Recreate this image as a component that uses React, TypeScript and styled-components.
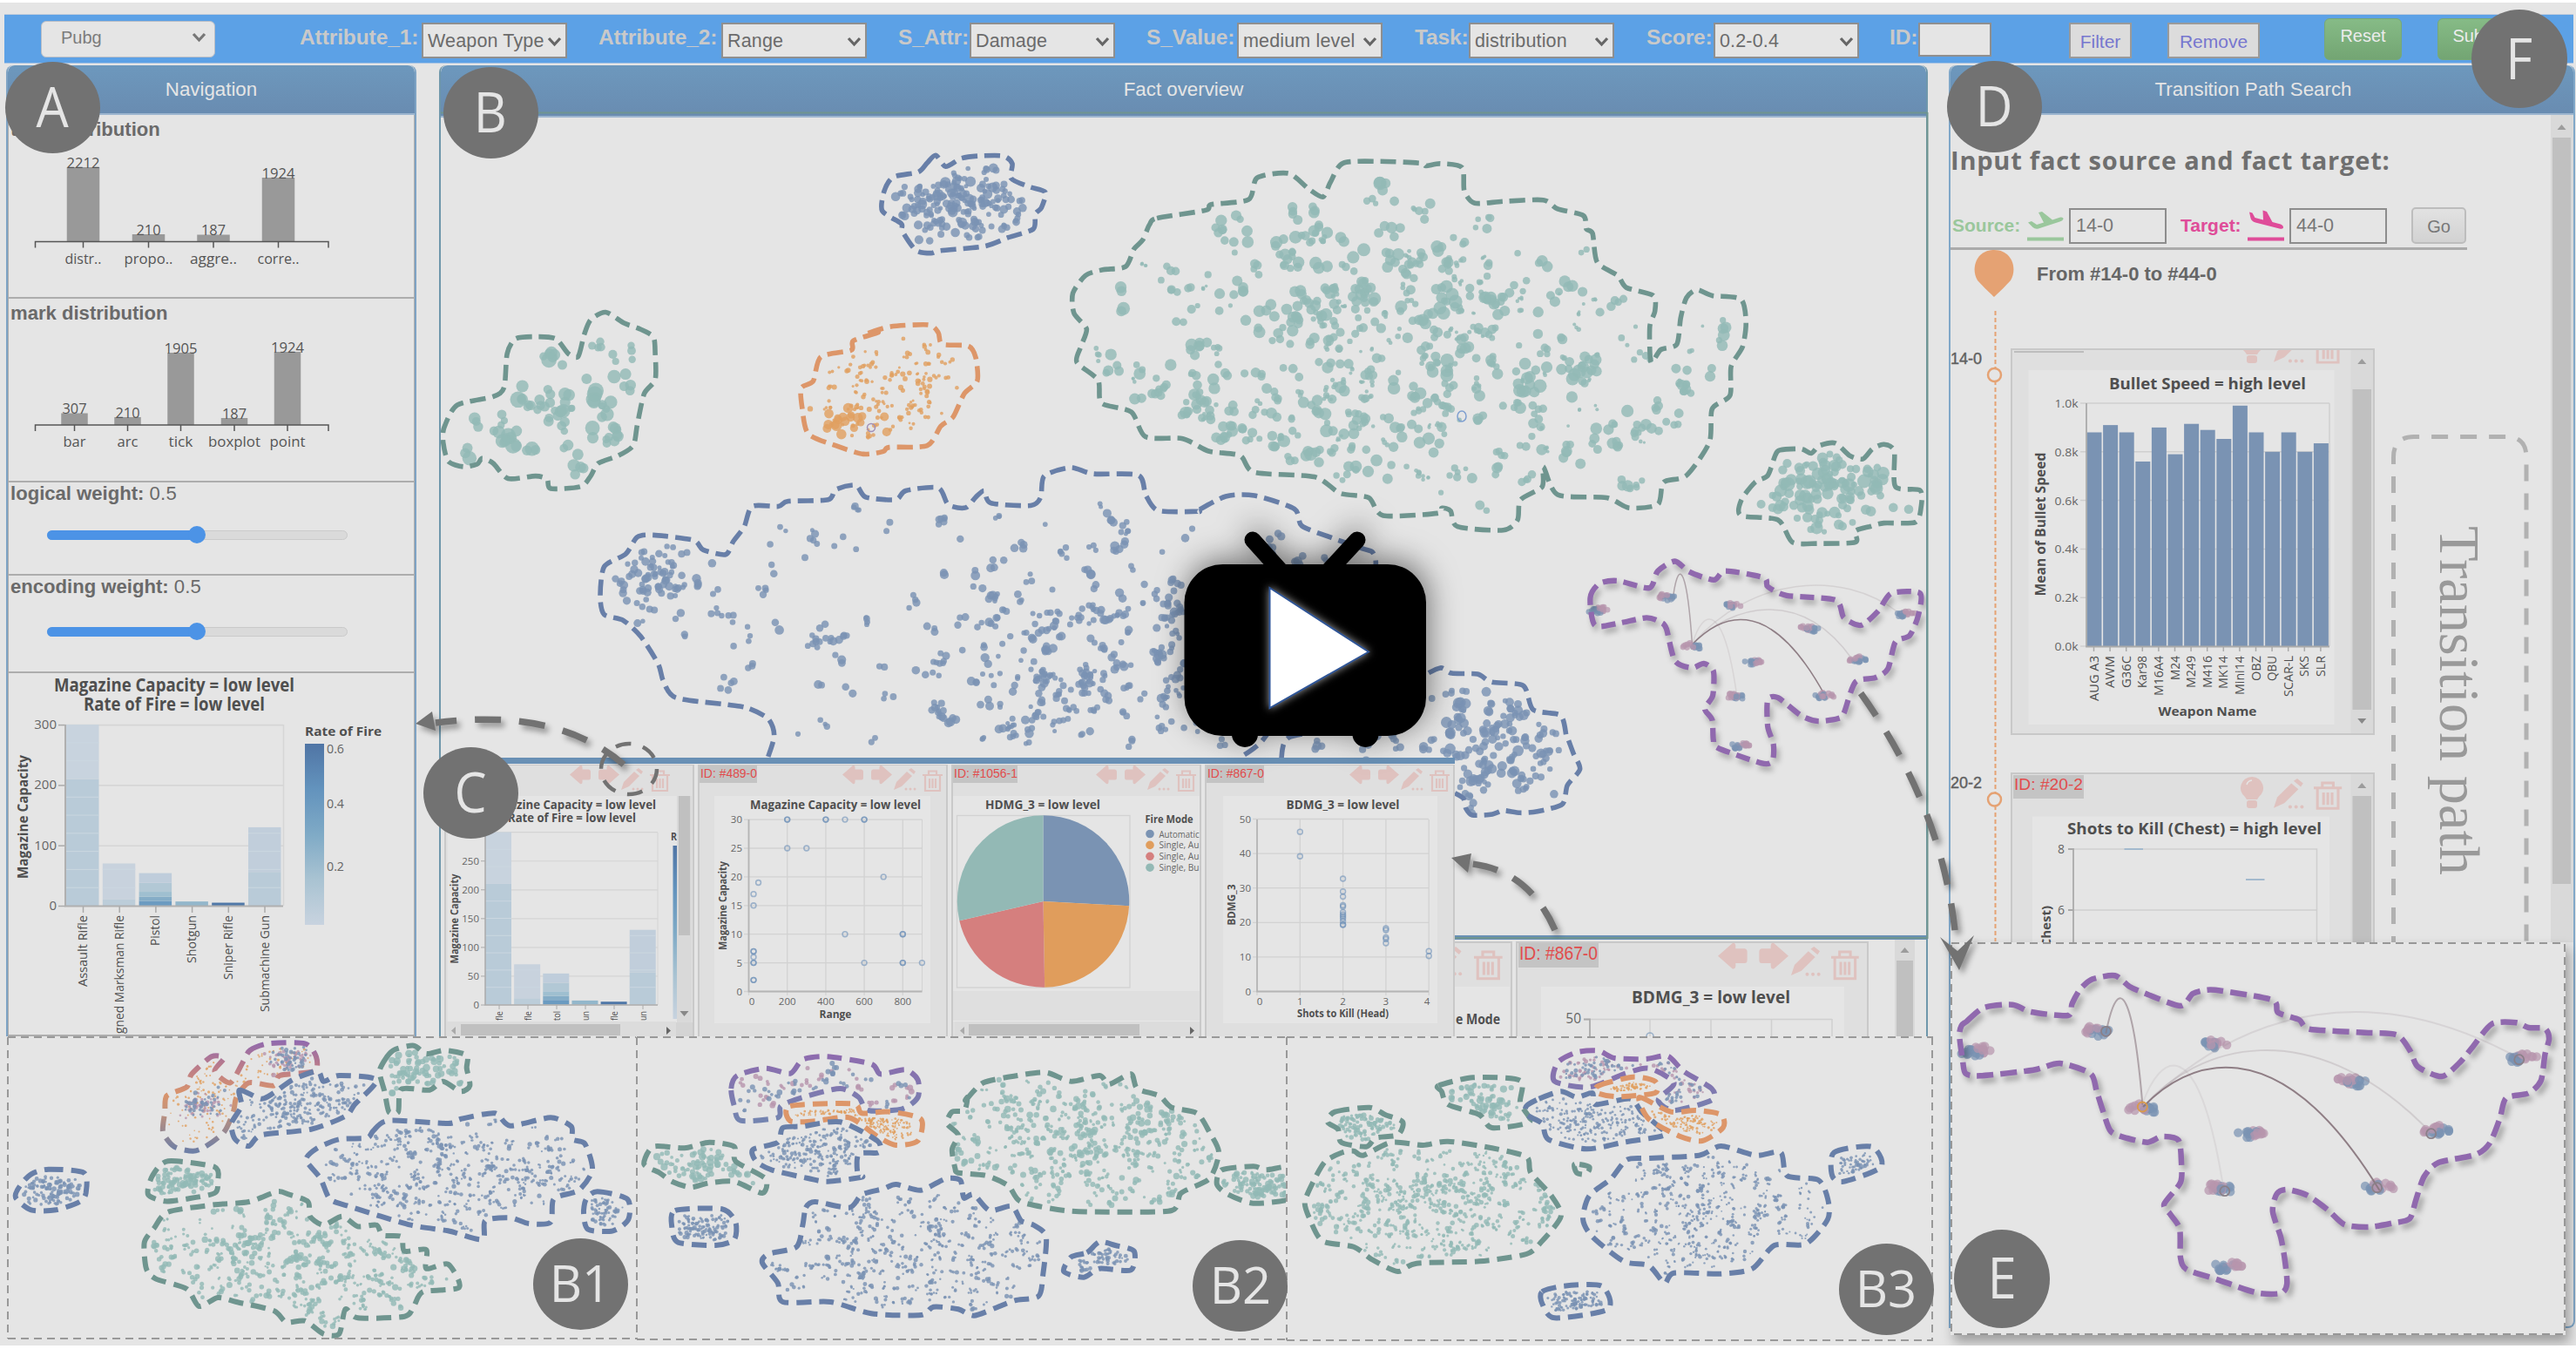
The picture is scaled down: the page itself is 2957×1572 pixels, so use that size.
import React from "react";
import styled, { createGlobalStyle } from "styled-components";

/* ---------- palette ---------- */
const BG = "#e5e5e5";
const BLUE = "#7a93b3";
const TEAL = "#93bab6";
const ORANGE = "#e0a060";
const PINK = "#b795ad";
const BLUE_LINE = "#687fa8";
const GREEN_LINE = "#6f958f";
const ORANGE_LINE = "#dd9669";
const PURPLE_LINE = "#9069ae";
const BADGE = "#727272";
const SANS = `"Liberation Sans", Arial, sans-serif`;
const HUMAN = `"Open Sans", "Noto Sans", sans-serif`;

const Global = createGlobalStyle`
  * { box-sizing: border-box; }
  body { margin: 0; background: #fff; font-family: ${SANS}; color: #666; }
  svg { display: block; }
`;

/* ---------- geometry helpers ---------- */
type Pt = [number, number];
const frame = (ox: number, oy: number, kx: number, ky: number) => (s: string): Pt[] =>
  s.trim().split(/\s+/).map((p) => {
    const [x, y] = p.split(",").map(Number);
    return [ox + x / kx, oy + y / ky] as Pt;
  });
const west = frame(480, 120, 1.742, 2.063);
const east = frame(1200, 120, 1.522, 1.96);
const south = frame(1340, 840, 1.742, 3);
const stripA = frame(0, 1180, 1.4, 3);
const stripB = frame(1100, 1180, 1.3876, 3);
const zoomed = frame(2220, 1060, 2.1275, 3);

const r1 = (n: number) => Math.round(n * 10) / 10;
function smooth(p: Pt[], closed = true) {
  const n = p.length;
  const at = (i: number) => (closed ? p[(i + n) % n] : p[Math.max(0, Math.min(n - 1, i))]);
  let d = `M${r1(p[0][0])} ${r1(p[0][1])}`;
  const last = closed ? n : n - 1;
  for (let i = 0; i < last; i++) {
    const a = at(i - 1), b = at(i), c = at(i + 1), e = at(i + 2);
    const k = 8;
    d += `C${r1(b[0] + (c[0] - a[0]) / k)} ${r1(b[1] + (c[1] - a[1]) / k)} ${r1(c[0] - (e[0] - b[0]) / k)} ${r1(c[1] - (e[1] - b[1]) / k)} ${r1(c[0])} ${r1(c[1])}`;
  }
  return d + (closed ? "Z" : "");
}
function inside([x, y]: Pt, p: Pt[]) {
  let hit = false;
  for (let i = 0, j = p.length - 1; i < p.length; j = i++) {
    if (p[i][1] > y !== p[j][1] > y && x < ((p[j][0] - p[i][0]) * (y - p[i][1])) / (p[j][1] - p[i][1]) + p[i][0]) hit = !hit;
  }
  return hit;
}
function rng(seed: number) {
  let s = seed * 7919 + 13;
  return () => {
    s = (s * 1664525 + 1013904223) % 4294967296;
    return s / 4294967296;
  };
}
type Spread = { n: number; r: [number, number]; clump?: number; core?: number; pad?: number; spot?: [number, number, number, number] };
function scatter(seed: number, poly: Pt[], o: Spread) {
  const rand = rng(seed);
  const g = () => rand() + rand() + rand() - 1.5;
  const xs = poly.map((p) => p[0]), ys = poly.map((p) => p[1]);
  const x0 = Math.min(...xs), x1 = Math.max(...xs), y0 = Math.min(...ys), y1 = Math.max(...ys);
  const pad = o.pad ?? 9;
  const sp = o.spot ?? [(x0 + x1) / 2, (y0 + y1) / 2, (x1 - x0) / 2.2, (y1 - y0) / 2.2];
  const ok = (p: Pt) => [[pad, 0], [-pad, 0], [0, pad], [0, -pad]].every(([a, b]) => inside([p[0] + a, p[1] + b], poly));
  const out: [number, number, number][] = [];
  for (let tries = 0; out.length < o.n && tries < o.n * 25; tries++) {
    const c: Pt = rand() < (o.core ?? 0.5) ? [sp[0] + g() * sp[2], sp[1] + g() * sp[3]] : [x0 + rand() * (x1 - x0), y0 + rand() * (y1 - y0)];
    if (!ok(c)) continue;
    const k = 1 + Math.floor(rand() * (o.clump ?? 1));
    const r = o.r[0] + rand() * (o.r[1] - o.r[0]);
    for (let i = 0; i < k; i++) out.push([c[0] + (i ? g() * r * 2.3 : 0), c[1] + (i ? g() * r * 2.3 : 0), r * (0.75 + rand() * 0.35)]);
  }
  return out;
}

const Dots = ({ seed, poly, color, alpha = 0.82, ...o }: { seed: number; poly: Pt[]; color: string; alpha?: number } & Spread) => (
  <g fill={color} fillOpacity={alpha}>
    {scatter(seed, poly, o).map(([x, y, r], i) => <circle key={i} cx={r1(x)} cy={r1(y)} r={r1(r)} />)}
  </g>
);
const Outline = ({ poly, color, open, w = 5.6, dash = "18 8" }: { poly: Pt[]; color: string; open?: boolean; w?: number; dash?: string }) => (
  <path d={smooth(poly, !open)} fill="none" stroke={color} strokeWidth={w} strokeDasharray={dash} strokeLinejoin="round" />
);

type TProps = { x: number; y: number; s?: number; b?: boolean; a?: "start" | "middle" | "end"; w?: number; rot?: number; fill?: string; font?: string; children: React.ReactNode };
const T = ({ x, y, s = 14, b, a = "start", w, rot, fill = "#4f4f4f", font = HUMAN, children }: TProps) => (
  <text x={x} y={y} fontSize={s} fontWeight={b ? 700 : 400} textAnchor={a} fill={fill} fontFamily={font}
    textLength={w} lengthAdjust={w ? "spacingAndGlyphs" : undefined} transform={rot ? `rotate(${rot} ${x} ${y})` : undefined}>{children}</text>
);

/* ---------- cluster outlines ---------- */
const topBlue = west("1018,138 1035,120 1055,147 1085,128 1120,122 1170,122 1188,140 1186,175 1222,195 1254,208 1246,245 1234,260 1230,295 1180,315 1132,336 1045,346 1025,352 995,345 968,300 966,282 928,252 932,205 950,172 1000,160");
const leftGreen = west("320,597 332,545 345,510 375,492 412,518 440,530 470,550 474,590 474,652 452,685 438,760 430,808 400,832 360,850 345,880 325,905 265,910 258,888 235,880 180,886 150,850 128,838 118,852 90,858 60,845 50,800 52,765 78,712 150,692 172,670 178,590 195,555 235,550 275,555 300,590");
const orangeC = west("920,540 870,560 866,582 805,598 790,655 766,672 768,720 780,780 835,808 890,828 930,822 942,812 1018,808 1045,762 1070,740 1092,685 1118,655 1115,600 1100,572 1048,568 1040,540 1020,522 945,526 900,542");
const bigBlue = [
  ...west("700,1545 712,1495 700,1455 660,1430 620,1422 515,1405 490,1365 480,1325 445,1260 410,1222 372,1208 364,1165 372,1095 415,1065 438,1025 470,1020 550,1032 570,1055 615,1066 630,1035 652,1000 668,952 720,952 740,940 820,936 835,912 875,902 895,930 955,936 975,915 1040,908 1060,948 1095,955 1115,930 1132,915 1145,944 1225,950 1245,930 1252,880 1305,860 1350,875 1440,878 1455,925 1480,962 1560,964"),
  ...east("265,915 315,882 365,880 435,910 448,948 500,975 555,1000 572,1008 577,1040 560,1150 450,1300 380,1430 340,1470"),
];
const lowBlue = [
  ...east("412,1475 425,1425 520,1400 600,1340 655,1290 690,1268 710,1280 755,1282 780,1300 835,1308 852,1362 900,1375 910,1420"),
  ...south("800,20 812,75 825,130 800,185 790,250 740,275 705,280 672,272 650,285 610,288 597,265 592,230 575,212"),
];
const bigGreen = east("195,256 280,238 290,225 355,214 370,165 425,155 460,190 485,208 498,175 520,132 585,128 655,132 665,138 690,133 728,142 732,195 750,222 800,218 870,215 895,235 940,250 945,280 956,290 964,355 1000,385 1015,412 1062,430 1065,465 1056,500 1058,580 1075,552 1103,540 1110,480 1120,435 1138,417 1165,430 1215,438 1224,490 1218,545 1198,590 1196,655 1165,685 1160,760 1120,835 1080,850 1070,900 1020,908 980,885 895,878 870,815 868,860 830,890 825,935 800,958 720,950 708,915 693,908 685,920 590,925 565,885 515,875 470,838 365,828 340,790 285,780 240,752 175,748 150,692 98,672 92,620 55,580 62,545 72,505 50,470 48,425 70,385 100,372 140,365 155,325 170,305 182,270");
const eastGreen = east("1283,778 1320,775 1338,785 1352,768 1380,762 1405,790 1428,798 1445,775 1465,765 1483,780 1485,860 1528,868 1530,905 1520,940 1465,942 1440,950 1415,960 1415,985 1350,988 1305,985 1280,935 1215,925 1216,890 1240,850 1262,835 1275,790");
const purpleC = east("952,1110 968,1078 1000,1072 1055,1088 1070,1050 1100,1028 1125,1052 1168,1070 1188,1050 1255,1065 1262,1085 1295,1105 1380,1115 1395,1155 1425,1172 1455,1140 1478,1100 1528,1100 1525,1150 1510,1195 1485,1210 1472,1270 1450,1290 1415,1300 1395,1370 1385,1382 1350,1388 1320,1375 1280,1335 1262,1340 1262,1400 1272,1440 1270,1478 1250,1482 1175,1448 1167,1430 1165,1385 1152,1360 1166,1330 1167,1275 1150,1258 1130,1268 1100,1252 1085,1180 1075,1165 1050,1155 1000,1168 960,1172");
const purpleZoom = zoomed("78,335 120,288 190,278 235,303 325,315 335,275 355,225 385,190 440,178 475,215 515,240 600,282 630,240 665,227 700,230 825,262 838,305 890,330 915,362 1050,374 1128,382 1160,435 1180,492 1238,525 1280,480 1310,430 1360,345 1420,340 1450,357 1490,360 1500,395 1490,450 1480,540 1450,583 1395,600 1380,670 1355,755 1320,795 1230,822 1195,870 1175,950 1160,1015 1120,1030 1060,1044 1000,1035 960,985 910,935 860,915 835,930 825,990 845,1080 855,1160 860,1240 845,1272 785,1270 690,1225 615,1190 600,1150 598,1050 575,1000 560,965 600,890 602,820 595,745 555,732 520,752 470,738 430,715 412,650 395,575 380,515 305,480 240,503 110,523 75,515 68,470 60,385 65,350");
const nodesSmall = east("968,1138 1085,1109 1200,1127 1335,1180 1502,1147 1132,1219 1238,1255 1204,1332 1360,1330 1419,1249 1217,1442");
const nodesZoom = zoomed("105,438 395,370 682,412 1018,543 1433,462 512,635 775,722 692,910 1083,904 1225,710 722,1177");

const ClusterNode = ({ at, k, seed }: { at: Pt; k: number; seed: number }) => {
  const rand = rng(seed + 31);
  const flip = seed % 2 ? 1 : -1;
  return (
    <g fillOpacity={0.72}>
      {Array.from({ length: 22 }, (_, i) => {
        const blue = i % 2 === 0;
        const side = blue ? 1 : -1;
        return <circle key={i} fill={blue ? BLUE : PINK} r={4.9 * k}
          cx={at[0] + ((rand() + rand() - 1) * 13 + side * flip * 5) * k} cy={at[1] + ((rand() - 0.5) * 8 + side * 1.5) * k} />;
      })}
    </g>
  );
};

/* ---------- frame components ---------- */
const Shell = styled.div`
  position: relative; width: 2957px; height: 1542px; margin-top: 3px; background: ${BG}; overflow: hidden;
  display: flex; flex-direction: column;
`;
const Bottom = styled.div`height: 27px; background: #fff;`;
const Toolbar = styled.header`
  display: flex; align-items: center; height: 57px; margin: 13px 3px 0 5px; padding-left: 42px;
  background: #5ca1e6; border-top: 1px solid #c3cddb; border-bottom: 1px solid #a9c4e4;
`;
const DataSelect = styled.div`
  display: flex; align-items: center; justify-content: space-between; width: 200px; height: 42px; padding: 0 9px 3px 22px;
  background: ${BG}; border: 1px solid #b9bec6; border-radius: 6px; font-size: 20px; color: #7c7c7c;
`;
const FieldLabel = styled.label<{ $w: number; $gap: number }>`
  width: ${(p) => p.$w}px; margin-left: ${(p) => p.$gap}px; font-size: 24.5px; font-weight: 700; color: #c9c9c9; white-space: nowrap;
  line-height: 30px; margin-top: -3px; letter-spacing: -0.1px;
`;
const FieldSelect = styled.div`
  display: flex; align-items: center; width: 167px; height: 41px; margin-top: 4px; padding: 2px 4px 0 5px; background: ${BG};
  border: 2px solid #8f8f8f; font-size: 21.5px; color: #6b6b6b; white-space: nowrap;
  span { flex: 1; overflow: hidden; letter-spacing: 0.15px; }
`;
const IdInput = styled.div`width: 84px; height: 39px; margin-top: 2px; background: ${BG}; border: 2px solid #8f8f8f;`;
const PlainButton = styled.button<{ $w: number; $gap: number }>`
  width: ${(p) => p.$w}px; height: 41px; margin: 4px 0 0 ${(p) => p.$gap}px; padding: 3px 0 0; background: #dcdcdc; border: 2px solid #9a9a9a;
  font: 21px ${SANS}; color: #7676cf;
`;
const GreenButton = styled.button<{ $gap: number; $w: number }>`
  width: ${(p) => p.$w}px; height: 48px; margin-left: ${(p) => p.$gap}px; padding: 0 0 6px; border: 1px solid #77a877; border-radius: 6px;
  background: linear-gradient(#86bb86, #73a573); color: #ececec; font: 20px ${SANS};
`;
const Main = styled.main`display: flex; margin: 2px 0 0 7px; height: 1467px;`;
const Left = styled.div`width: 2212px; margin-right: 18px; height: 100%;`;
const TopRow = styled.div`display: flex; height: 1115px; gap: 26px;`;
const PanelHead = styled.div<{ $h?: number; $shift?: number }>`
  height: ${(p) => p.$h ?? 57}px; flex: none; display: flex; align-items: flex-start; justify-content: center; padding: 17px ${(p) => p.$shift ?? 0}px 0 0;
  background: linear-gradient(#6d98bd, #698cb1); border-radius: 8px 8px 0 0; border-bottom: 2px solid #9db6cf;
  color: ${BG}; font-size: 22.3px; line-height: 22px;
`;
const NavPanel = styled.section`
  width: 471px; display: flex; flex-direction: column; border: solid #7ea3c4; border-width: 0 2px; border-radius: 8px 8px 0 0; overflow: hidden;
`;
const NavSection = styled.div<{ $h: number }>`
  height: ${(p) => p.$h}px; border: solid #adadad; border-width: 0 1px 2px; overflow: hidden;
`;
const NavTitle = styled.h3<{ $h?: number; $up?: number }>`
  height: ${(p) => p.$h ?? 33}px; margin: 0; padding: ${(p) => 2 - (p.$up ?? 0)}px 0 0 2px; font-size: 22.1px; line-height: 30px; font-weight: 700; color: #6a6a6a; white-space: nowrap;
  span { font-weight: 400; letter-spacing: 0.2px; }
`;
const WeightTitle = styled(NavTitle)`padding-top: 0; line-height: 26px; height: 26px;`;
const Track = styled.div<{ $gap: number }>`
  position: relative; width: 345px; height: 11px; margin: ${(p) => p.$gap}px 0 0 44px; border-radius: 6px; background: #dadada; border: 1.5px solid #cacaca;
`;
const Fill = styled.div`position: absolute; left: -1px; top: -1px; width: 173px; height: 11px; border-radius: 6px; background: #4c93e6;`;
const Thumb = styled.div`position: absolute; left: 161px; top: -6px; width: 20px; height: 20px; border-radius: 50%; background: #4c93e6;`;
const FactPanel = styled.section`
  position: relative; width: 1709px; border: solid #6f97ab; border-width: 0 2px; border-radius: 8px 8px 0 0; overflow: hidden;
`;
const CompareRow = styled.div`display: flex; padding-left: 1px;`;
const Compare = styled.section<{ $w: number; $h: number }>`width: ${(p) => p.$w}px; height: ${(p) => p.$h}px;`;
const CardStrip = styled.div`
  position: absolute; left: 0; bottom: 0; width: 1164px; height: 320px; background: ${BG}; border-top: 7px solid #6990b5;
  display: flex; gap: 4px; padding: 1px 0 0 4px;
`;
const LowerStrip = styled.div`
  position: absolute; left: 1164px; bottom: 0; width: 541px; height: 116px; background: ${BG}; border-top: 5px solid #6990b5; overflow: hidden;
`;
const FactCard = styled.article`
  width: 287px; height: 312px; flex: none; background: #dfdfdf; border: solid #c9c9c9; border-width: 1px 2px 0; overflow: hidden;
`;
const CardHead = styled.div<{ $inset?: number }>`height: 35px; display: flex; justify-content: space-between; padding-right: ${(p) => p.$inset ?? 3}px;`;
const IdTag = styled.div`
  align-self: flex-start; width: max-content; padding: 0 0 0 1px; background: #c4c4c4;
`;

const SearchPanel = styled.section`
  width: 719px; height: 1450px; border: solid #80a7c8; border-width: 0 2px 2px; border-radius: 8px 8px 8px 0;
`;
const SearchBody = styled.div`display: flex; height: 950px; overflow: hidden;`;
const PathColumn = styled.div`width: 490px; flex: none;`;
const SearchTitle = styled.h2`
  margin: 32px 0 0; font: 700 29px/40px ${HUMAN}; color: #6f6f6f; white-space: nowrap; letter-spacing: 0.78px;
`;
const Form = styled.form`
  display: flex; align-items: center; width: 593px; height: 56px; margin-top: 27px; padding: 3px 0 0 2px; border-bottom: 3px solid #ababab;
`;
const FormLabel = styled.label<{ $c: string; $w: number }>`width: ${(p) => p.$w}px; color: ${(p) => p.$c}; font-size: 21px; font-weight: 700;`;
const FormInput = styled.div<{ $gap: number }>`
  width: 112px; height: 41px; margin: 0 ${(p) => p.$gap}px 0 6px; padding-left: 6px; border: 2px solid #8d8d8d; font-size: 21.5px; line-height: 37px; color: #777;
`;
const GoButton = styled.button`
  width: 63px; height: 42px; padding: 2px 0 0; border: 2px solid #bdbdbd; border-radius: 5px; background: linear-gradient(#e2e2e2, #d2d2d2); font: 20px ${SANS}; color: #777;
`;
const FromRow = styled.div`
  display: flex; align-items: flex-start; height: 113px; padding-left: 27px; gap: 26px;
  b { padding-top: 16px; font-size: 22px; line-height: 24px; color: #666; white-space: nowrap; }
`;
const Step = styled.div<{ $h: number }>`display: flex; height: ${(p) => p.$h}px;`;
const StepMark = styled.div`
  width: 69px; flex: none; font: 400 18px/24px ${SANS}; color: #5f5f5f; -webkit-text-stroke: 0.4px #5f5f5f;
`;
const PathCard = styled.article<{ $h: number }>`
  width: 418px; height: ${(p) => p.$h}px; flex: none; background: #dfdfdf; border: 2px solid #c8c8c8; display: flex; overflow: hidden;
`;
const PathNote = styled.div`
  align-self: flex-end; margin: 0 25px 0 16px; width: 158px; height: 583px; flex: none;
`;
const SideBar = styled.div`width: 26px; flex: none; background: #dcdcdc;`;
const ZoomCard = styled.section`width: 706px; height: 451px; background: ${BG}; margin-left: 0; filter: drop-shadow(4px 8px 7px rgba(0,0,0,.32));`;
const Badge = styled.div<{ $x: number; $y: number; $w?: number; $h?: number; $s?: number; $k?: number }>`
  position: absolute; left: ${(p) => p.$x - (p.$w ?? 109) / 2}px; top: ${(p) => p.$y - 3 - (p.$h ?? 105) / 2}px;
  width: ${(p) => p.$w ?? 109}px; height: ${(p) => p.$h ?? 105}px; border-radius: 50%; background: ${BADGE}; color: ${BG};
  display: flex; align-items: center; justify-content: center; padding-bottom: 3px; font: ${(p) => p.$s ?? 64}px/1 ${HUMAN};
  span { transform: scaleX(${(p) => p.$k ?? 0.92}); }
`;
const Overlay = styled.svg`position: absolute; left: 0; top: -3px; pointer-events: none;`;

/* ---------- icons ---------- */
const Chevron = ({ c = "#666" }: { c?: string }) => (
  <svg width="17" height="14" viewBox="0 0 17 14"><path d="M2 3l6.500 7L15 3" fill="none" stroke={c} strokeWidth="3.200" /></svg>
);
const PALE = "#dfc2bf";
const LeftArrow = () => <path d="M0 10.500 12 0Q15 -1 14.500 4.500H22Q24 5 24 7V14Q24 16.500 22 16.500H14.500Q15 22 12 21Z" fill={PALE} />;
const Pencil = () => (
  <g fill={PALE}>
    <path d="M0 25 3 16 15 4l6 5L9 21Z" /><path d="M17 2l3-2 5 4-2 3Z" />
    <circle cx="14" cy="24" r="1.500" /><circle cx="19" cy="24" r="1.500" /><circle cx="24" cy="24" r="1.500" />
  </g>
);
const Trash = () => (
  <g fill="none" stroke={PALE} strokeWidth="2.200"><path d="M0 6H23M7 6V1.500H16V6M3 7V24H20V7M8 10V21M11.500 10V21M15 10V21" /></g>
);
const Bulb = () => (
  <g fill={PALE}><path d="M14 0a14 13 0 0 1 8 23l-2 3H8l-2-3A14 13 0 0 1 14 0Z" /><rect x="8" y="27" width="12" height="9" rx="3" /><path d="M8 9a7 7 0 0 1 6-5" stroke={BG} strokeWidth="1.500" fill="none" /></g>
);
const CardIcons = () => (
  <svg width="118" height="32" viewBox="0 0 118 32">
    <g transform="translate(2 0)"><LeftArrow /></g>
    <g transform="translate(59 0) scale(-1 1)"><LeftArrow /></g>
    <g transform="translate(61 3)"><Pencil /></g>
    <g transform="translate(94 5)"><Trash /></g>
  </svg>
);
const CardTag = ({ w, children }: { w: number; children: string }) => (
  <IdTag><svg width={w} height="20" viewBox={`0 0 ${w} 20`}><T x={0} y={13.5} s={15.5} w={w} font={SANS} fill="#e14c4c">{children}</T></svg></IdTag>
);
const TakeOff = () => (
  <svg width="42" height="36" viewBox="0 0 42 36" fill="#9ac79c">
    <path d="M1 14.500 5 13l6 4 8-2.500L13 3l4-1L29 11.500 38 8.500q4-.5 3.500 2-.5 2-4 3L13 21.500Q9 22.500 6.500 20Z" /><rect y="31.500" width="42" height="4" />
  </svg>
);
const Landing = () => (
  <svg width="42" height="36" viewBox="0 0 42 36" fill="#df4c99">
    <path d="M2 2.500 5.500 3.500 8.500 9 18 11.500 17.500 0.500 22 2 28.500 14 38 16.500Q41.500 18 41 20.500 40 22.500 36.500 21.500L9 14.500Q4.500 13 3.500 9.500Z" /><rect y="31.500" width="42" height="4" />
  </svg>
);
type VB = { x: number; w: number; y: number; h: number; top: number; bottom: number; down?: number; up: number };
const VBar = ({ x, w, y, h, top, bottom, down, up }: VB) => (
  <g>
    <rect x={x} y={y} width={w} height={h} fill="#d9d9d9" />
    <rect x={x + 2} y={top} width={w - 4} height={bottom - top} fill="#c0c0c0" />
    <path d={`M${x + w / 2 - 5} ${up + 3}h10l-5 -6Z`} fill="#9c9c9c" />
    {down && <path d={`M${x + w / 2 - 5} ${down - 3}h10l-5 6Z`} fill="#888" />}
  </g>
);
const HBar = ({ x, w, l, r }: { x: number; w: number; l: number; r: number }) => (
  <g>
    <rect x={x} y={1173} width={w} height={17} fill="#dcdcdc" />
    <rect x={l} y={1176} width={r - l} height={13} fill="#c0c0c0" />
    <path d={`M${x + 11} 1179v9l-5 -4.500Z`} fill="#aaa" /><path d={`M${x + w - 11} 1179v9l5 -4.500Z`} fill="#666" />
  </g>
);

/* ---------- navigation charts ---------- */
const MiniBars = ({ top, h, axis, data, bw }: { top: number; h: number; axis: number; bw: number; data: [number, number, string, number, number][] }) => (
  <svg width="465" height={h} viewBox={`10 ${top} 465 ${h}`}>
    {data.map(([x, y, name, v, w]) => (
      <g key={name}>
        <rect x={x - bw / 2} y={y} width={bw} height={axis - y} fill="#999" />
        <T x={x} y={y + 0.5} s={17} a="middle" w={v > 999 ? 38 : 28} fill="#555">{v}</T>
        <path d={`M${x} ${axis}v7`} stroke="#555" strokeWidth="1.500" />
        <T x={x} y={axis + 25} s={17} a="middle" w={w} fill="#555">{name}</T>
      </g>
    ))}
    <path d={`M40.500 ${axis + 7}V${axis}H377V${axis + 7}`} fill="none" stroke="#555" strokeWidth="1.500" />
  </svg>
);

const MAG = [
  { name: "Assault Rifle", v: 300, len: 82, seg: [[0, 210, "#b9cbd8"], [210, 300, "#c8d3de"]] },
  { name: "Designed Marksman Rifle", v: 70, len: 164, seg: [[0, 11, "#bccdd9"], [11, 70, "#c8d2dd"]] },
  { name: "Pistol", v: 54, len: 35, seg: [[0, 8, "#6b9bc1"], [8, 15, "#85adc7"], [15, 23, "#9fbfd0"], [23, 38, "#b2c8d5"], [38, 54, "#bfcddb"]] },
  { name: "Shotgun", v: 7, len: 55, seg: [[0, 7, "#93b7cb"]] },
  { name: "Sniper Rifle", v: 5, len: 74, seg: [[0, 5, "#5078a8"]] },
  { name: "Submachine Gun", v: 130, len: 111, seg: [[0, 56, "#b9cbd8"], [56, 130, "#c1cedb"]] },
] as { name: string; v: number; len: number; seg: [number, number, string][] }[];

const StackedBars = ({ x0, pitch, bw, y0, k }: { x0: number; pitch: number; bw: number; y0: number; k: number }) => (
  <>
    {MAG.map((m, i) => (
      <g key={m.name}>
        {m.seg.map(([a, b, c], j) => <rect key={j} x={x0 + i * pitch} width={bw} y={y0 - b * k} height={(b - a) * k} fill={c} />)}
        {[30, 60, 90, 120, 150, 180, 240, 270].filter((t) => t < m.v && m.v > 60).map((t) => (
          <path key={t} d={`M${x0 + i * pitch} ${y0 - t * k}h${bw}`} stroke="#cbd7e0" strokeWidth="1" />
        ))}
      </g>
    ))}
  </>
);
const FireGradient = ({ id }: { id: string }) => (
  <defs><linearGradient id={id} x1="0" x2="0" y1="0" y2="1">
    <stop offset="0" stopColor="#5075a5" /><stop offset="0.250" stopColor="#6393bd" /><stop offset="0.500" stopColor="#7faac6" /><stop offset="0.750" stopColor="#a9c3d2" /><stop offset="1" stopColor="#c8d3df" />
  </linearGradient></defs>
);

const MagazineChart = () => (
  <svg width="465" height="416" viewBox="10 773 465 416">
    <FireGradient id="fireA" />
    <T x={62} y={794} s={20.5} b w={276}>Magazine Capacity = low level</T>
    <T x={96} y={816} s={20.5} b w={208}>Rate of Fire = low level</T>
    {[300, 200, 100].map((v) => <path key={v} d={`M75 ${1040.5 - v * 0.693}H325`} stroke="#d6d6d6" strokeWidth="1.600" />)}
    <path d="M325.500 832V1040" stroke="#d6d6d6" strokeWidth="1.500" />
    <StackedBars x0={76} pitch={41.8} bw={37.5} y0={1040} k={0.693} />
    {[300, 200, 100, 0].map((v) => (
      <g key={v}><path d={`M67 ${1040.5 - v * 0.693}h8`} stroke="#aaa" strokeWidth="1.500" /><T x={65} y={1045 - v * 0.693} s={15} a="end" fill="#666">{v}</T></g>
    ))}
    <path d="M75 832V1040.500H325" stroke="#b0b0b0" strokeWidth="2" fill="none" />
    {MAG.map((m, i) => (
      <g key={m.name}><path d={`M${95.5 + i * 41.7} 1041v7`} stroke="#aaa" strokeWidth="1.500" />
        <T x={100 + i * 41.7} y={1051} s={14.5} a="end" rot={-90} w={m.len}>{m.name}</T></g>
    ))}
    <T x={32} y={938} s={15.5} b a="middle" rot={-90} w={142}>Magazine Capacity</T>
    <T x={350} y={845} s={14.5} b w={88}>Rate of Fire</T>
    <rect x="350" y="854" width="22" height="208" fill="url(#fireA)" />
    <T x={375} y={865} s={14.5} w={20} fill="#666">0.6</T><T x={375} y={928} s={14.5} w={20} fill="#666">0.4</T><T x={375} y={1000} s={14.5} w={20} fill="#666">0.2</T>
  </svg>
);

/* ---------- fact overview ---------- */
const Arcs = ({ f, pts, w }: { f: (s: string) => Pt[]; pts: [string, number][]; w: number }) => (
  <g fill="none" stroke="#8a7880" strokeWidth={w} strokeLinecap="round">
    {pts.map(([s, o]) => {
      const [a, c1, c2, b] = f(s);
      return <path key={s} opacity={o} d={`M${a}C${c1} ${c2} ${b}`} />;
    })}
  </g>
);

const FactCanvas = () => (
  <svg width="1705" height="1055" viewBox="506 135 1705 1055">
    <Dots seed={1} poly={topBlue} color={BLUE} n={185} r={[3, 5.6]} core={0.6} pad={11} />
    <Dots seed={2} poly={leftGreen} color={TEAL} n={105} r={[4.5, 9]} clump={4} core={0.25} pad={15} />
    <Dots seed={3} poly={orangeC} color={ORANGE} n={165} r={[1.8, 3]} clump={2} core={0.6} pad={14} />
    <Dots seed={44} poly={orangeC} color={ORANGE} n={20} r={[4, 6]} core={1} spot={[968, 482, 44, 16]} />
    <Dots seed={5} poly={bigBlue} color={BLUE} n={330} r={[3.2, 5]} clump={4} core={1} spot={[1240, 760, 170, 140]} pad={14} />
    <Dots seed={51} poly={bigBlue} color={BLUE} n={260} r={[3.2, 5]} clump={4} core={0} pad={16} />
    <Dots seed={6} poly={bigBlue} color={BLUE} n={85} r={[3.2, 5]} core={1} spot={[760, 662, 52, 42]} />
    <Dots seed={7} poly={bigGreen} color={TEAL} n={420} r={[4, 7.2]} clump={3} core={1} spot={[1560, 405, 330, 185]} pad={16} />
    <Dots seed={71} poly={bigGreen} color={TEAL} n={240} r={[4.2, 7.6]} clump={4} core={0} pad={16} />
    <Dots seed={8} poly={bigGreen} color={TEAL} n={230} r={[2, 3.6]} clump={4} core={0.7} pad={16} />
    <Dots seed={9} poly={eastGreen} color={TEAL} n={120} r={[4, 7.5]} core={0.75} pad={11} />
    <Dots seed={10} poly={lowBlue} color={BLUE} n={190} r={[3.6, 6]} clump={2} core={0.5} spot={[1715, 850, 80, 80]} />
    <Outline poly={topBlue} color={BLUE_LINE} />
    <Outline poly={leftGreen} color={GREEN_LINE} />
    <Outline poly={orangeC} color={ORANGE_LINE} />
    <Outline poly={bigBlue} color={BLUE_LINE} open />
    <Outline poly={bigGreen} color={GREEN_LINE} />
    <Outline poly={eastGreen} color={GREEN_LINE} />
    <Outline poly={lowBlue} color={BLUE_LINE} open />
    <circle cx="1000" cy="491" r="4.500" fill="none" stroke="#a08fb8" strokeWidth="1.500" />
    <ellipse cx="1678" cy="478" rx="5" ry="6" fill="none" stroke="#7f9fd0" strokeWidth="1.500" />
    <Arcs f={east} w={1.5} pts={[
      ["1130,1215 1175,1155 1260,1090 1362,1330", 0.95], ["1130,1215 1122,1060 1108,1010 1097,1105", 0.6],
      ["1130,1215 1150,1130 1185,1120 1208,1330", 0.15], ["1130,1215 1200,1125 1320,1085 1410,1249", 0.22], ["1130,1215 1230,1065 1390,1042 1492,1145", 0.18],
    ]} />
    {nodesSmall.map((p, i) => <ClusterNode key={i} at={p} k={0.68} seed={i} />)}
    <g style={{ filter: "drop-shadow(3px 5px 3px rgba(0,0,0,.28))" }}><Outline poly={purpleC} color={PURPLE_LINE} w={6.3} dash="16 8" /></g>
  </svg>
);

const Ring = ({ x, y }: { x: number; y: number }) => <circle cx={x} cy={y} r="2.900" fill="none" stroke="#6d8fb8" strokeWidth="1.600" opacity={0.6} />;

const CardA = () => (
  <svg width="283" height="276" viewBox="512 914 283 276">
    <FireGradient id="fireB" />
    <rect x="514" y="914" width="264" height="260" fill={BG} />
    <T x={557} y={929} s={14} b w={196}>Magazine Capacity = low level</T>
    <T x={583} y={944} s={14} b w={147}>Rate of Fire = low level</T>
    {[300, 250, 200, 150, 100, 50].map((v) => <path key={v} d={`M557 ${1154 - v * 0.661}H755`} stroke="#d4d4d4" strokeWidth="1.200" />)}
    <path d="M755 956V1154" stroke="#d4d4d4" />
    <StackedBars x0={557} pitch={33.15} bw={30} y0={1153.5} k={0.66} />
    {[250, 200, 150, 100, 50, 0].map((v) => (
      <g key={v}><path d={`M552 ${1154 - v * 0.661}h5`} stroke="#aaa" /><T x={550} y={1158 - v * 0.661} s={11.5} a="end" fill="#666">{v}</T></g>
    ))}
    <path d="M557 956V1154H755" fill="none" stroke="#aaa" strokeWidth="1.500" />
    {["fle", "fle", "tol", "un", "fle", "un"].map((t, i) => (
      <g key={i}><path d={`M${573 + i * 33} 1154v5`} stroke="#aaa" /><T x={577 + i * 33} y={1161} s={10} a="end" w={11} rot={-90}>{t}</T></g>
    ))}
    <T x={526} y={1055} s={12} b a="middle" rot={-90} w={103}>Magazine Capacity</T>
    <T x={770} y={965} s={11.500} b w={7}>R</T>
    <rect x="772.500" y="971" width="5" height="199" fill="url(#fireB)" />
    <VBar x={777} w={17} y={878} h={296} top={914} bottom={1074} up={889} down={1164} />
    <HBar x={512} w={264} l={529} r={712} /><rect x="776" y="1174" width="19" height="16" fill="#d4d4d4" />
  </svg>
);

const SCATTER: Pt[] = [[200, 30], [200, 30], [400, 30], [400, 30], [500, 30], [600, 30], [600, 30], [200, 25], [300, 25], [700, 20], [50, 19], [25, 17], [25, 15], [500, 10], [800, 10], [800, 10], [25, 7], [25, 7], [25, 6], [25, 5], [25, 5], [600, 5], [800, 5], [800, 5], [900, 5], [25, 2], [25, 2]];
const CardB = () => (
  <svg width="283" height="276" viewBox="803 914 283 276">
    <rect x="820" y="914" width="248" height="261" fill={BG} />
    <T x={861} y={929} s={14} b w={196}>Magazine Capacity = low level</T>
    {[0, 5, 10, 15, 20, 25, 30].map((v) => (
      <g key={v}><path d={`M854 ${1138.5 - v * 6.58}H1058.500`} stroke="#d2d2d2" strokeWidth="1.300" /><T x={852} y={1142.5 - v * 6.58} s={11.5} a="end" fill="#666">{v}</T></g>
    ))}
    {[0, 200, 400, 600, 800].map((v) => (
      <g key={v}><path d={`M${859.5 + v * 0.221} 941V1143`} stroke="#d2d2d2" strokeWidth="1.300" /><T x={v ? 859.5 + v * 0.221 : 863} y={1154} s={11.5} a="middle" fill="#666">{v}</T></g>
    ))}
    <path d="M1058.500 941V1138" stroke="#d2d2d2" /><path d="M859.500 941V1138.500H1058.500" stroke="#b5b5b5" strokeWidth="1.800" fill="none" />
    {SCATTER.map(([a, b], i) => <Ring key={i} x={859.5 + a * 0.221} y={1138.5 - b * 6.58} />)}
    <T x={959} y={1168.5} s={12} b a="middle">Range</T>
    <T x={834} y={1040} s={12} b a="middle" rot={-90} w={102}>Magazine Capacity</T>
  </svg>
);

const Slice = ({ a, b, fill }: { a: number; b: number; fill: string }) => {
  const p = (d: number) => `${r1(1197.5 + 98.7 * Math.sin((d * Math.PI) / 180))} ${r1(1035 - 98.7 * Math.cos((d * Math.PI) / 180))}`;
  return <path d={`M1197.500 1035L${p(a)}A98.700 98.700 0 0 1 ${p(b)}Z`} fill={fill} />;
};
const CardC = () => (
  <svg width="283" height="276" viewBox="1094 914 283 276">
    <rect x="1094" y="914" width="283" height="224" fill={BG} />
    <T x={1131} y={929} s={14} b w={132}>HDMG_3 = low level</T>
    <rect x="1098.500" y="936.500" width="198.500" height="197.500" fill="none" stroke="#d2d2d2" strokeWidth="1.300" />
    <Slice a={0} b={93} fill="#7a93b3" /><Slice a={93} b={179} fill="#e09d5c" /><Slice a={179} b={257} fill="#d57f7e" /><Slice a={257} b={360} fill="#93b9b5" />
    <T x={1314.5} y={944.5} s={11.5} b w={55}>Fire Mode</T>
    {[["Automatic", BLUE], ["Single, Au", "#e09d5c"], ["Single, Au", "#d57f7e"], ["Single, Bu", "#93b9b5"]].map(([t, c], i) => (
      <g key={i}><circle cx="1320" cy={957.5 + i * 12.9} r="4.800" fill={c} /><T x={1330.5} y={961.5 + i * 12.9} s={11.5} w={46} fill="#666">{t}</T></g>
    ))}
    <path d="M1094 1172.500H1377" stroke="#e8e8e8" /><HBar x={1096} w={281} l={1112} r={1308} />
  </svg>
);

const HEAD: Pt[] = [[1, 46.3], [1, 39.2], [2, 32.7], [2, 29], [2, 27.5], [2, 25], [2, 24.6], [2, 23], [2, 22.3], [2, 21.8], [2, 21.2], [2, 20.4], [2, 19.4], [2, 19.3], [3, 18.3], [3, 17.8], [3, 15.7], [3, 15.2], [3, 14], [4, 11.7], [4, 10.3]];
const CardD = () => (
  <svg width="283" height="276" viewBox="1385 914 283 276">
    <rect x="1404" y="914" width="246" height="261" fill={BG} />
    <T x={1476.5} y={929} s={14} b w={130}>BDMG_3 = low level</T>
    {[0, 10, 20, 30, 40, 50].map((v) => (
      <g key={v}><path d={`M1438 ${1138.5 - v * 3.96}H1640`} stroke="#d2d2d2" strokeWidth="1.300" /><T x={1436} y={1142.5 - v * 3.96} s={11.5} a="end" fill="#666">{v}</T></g>
    ))}
    {[0, 1, 2, 3, 4].map((v) => (
      <g key={v}><path d={`M${1443 + v * 49.3} 941V1143`} stroke="#d2d2d2" strokeWidth="1.300" /><T x={v === 0 ? 1446 : v === 4 ? 1638 : 1443 + v * 49.3} y={1154} s={11.5} a="middle" fill="#666">{v}</T></g>
    ))}
    <path d="M1443 941V1138.500H1640" stroke="#b5b5b5" strokeWidth="1.800" fill="none" />
    {HEAD.map(([a, b], i) => <Ring key={i} x={1443 + a * 49.3} y={1138.5 - b * 3.96} />)}
    <T x={1489} y={1168} s={12} b w={105}>Shots to Kill (Head)</T>
    <T x={1418} y={1039} s={12} b a="middle" rot={-90} w={47}>BDMG_3</T>
  </svg>
);

const LowerCards = () => (
  <svg width="541" height="111" viewBox="1670 1079 541 111">
    <rect x="1660" y="1082" width="75" height="120" fill="#dfdfdf" stroke="#c9c9c9" strokeWidth="2" />
    <rect x="1660" y="1133" width="73" height="60" fill={BG} />
    <g transform="translate(1645 1087) scale(1.300)"><Pencil /></g>
    <g transform="translate(1692 1091) scale(1.420 1.360)"><Trash /></g>
    <T x={1671} y={1176} s={16} b w={51}>e Mode</T>
    <rect x="1741" y="1082" width="403" height="120" fill="#dfdfdf" stroke="#c9c9c9" strokeWidth="2" />
    <rect x="1743" y="1083" width="92" height="28" fill="#c4c4c4" />
    <T x={1744} y={1101.5} s={21.5} font={SANS} w={90} fill="#e14c4c">ID: #867-0</T>
    <g transform="translate(1972 1083) scale(1.400)"><LeftArrow /></g>
    <g transform="translate(2053 1083) scale(-1.400 1.400)"><LeftArrow /></g>
    <g transform="translate(2056 1087) scale(1.320)"><Pencil /></g>
    <g transform="translate(2102 1091) scale(1.380 1.360)"><Trash /></g>
    <rect x="1769" y="1133" width="348" height="70" fill={BG} />
    <T x={1873} y={1152} s={19.5} b w={182}>BDMG_3 = low level</T>
    <T x={1815} y={1175} s={15.5} a="end" fill="#666">50</T>
    <path d="M1818 1170.500H2103M1894 1170V1190M1964 1170V1190M2033.500 1170V1190M2103 1170V1190" stroke="#d0d0d0" strokeWidth="1.500" />
    <path d="M1818 1170.500h7V1190" stroke="#aaa" strokeWidth="1.800" fill="none" />
    <circle cx="1894" cy="1190" r="4" fill="none" stroke="#6d8fb8" strokeWidth="1.600" opacity=".6" />
    <VBar x={2175} w={23} y={1079} h={111} top={1103} bottom={1192} up={1091} />
  </svg>
);

/* ---------- comparison strips ---------- */
type Cl = { p: Pt[]; c: string; d: string; n: number; r: [number, number]; k?: number; d2?: string };
const B = BLUE_LINE, G = GREEN_LINE, O = ORANGE_LINE;
const compare1: Cl[] = [
  { p: stripA("78,488 135,500 138,570 128,600 90,628 50,628 25,585 32,545 50,505"), c: B, d: BLUE, n: 120, r: [1.5, 2.8] },
  { p: stripA("402,78 432,55 490,55 508,100 505,150 450,165 440,200 400,190 380,240 375,290 360,360 330,410 310,425 280,410 262,360 265,290 268,235 300,205 308,160 340,100 360,105 345,150 370,190 390,120"), c: "url(#warm)", d: ORANGE, n: 150, r: [0.9, 1.6] },
  { p: stripA("385,215 420,245 440,225 470,180 510,150 520,185 545,165 605,180 570,265 555,305 500,350 420,370 400,408 378,385 372,330 388,270"), c: B, d: BLUE, n: 230, r: [1.3, 2.4] },
  { p: stripA("622,100 635,75 665,62 685,90 715,78 750,95 750,140 755,200 740,220 712,185 690,215 645,212 640,290 625,290 618,220 610,150"), c: G, d: TEAL, n: 80, r: [2.3, 4.6] },
  { p: stripA("600,355 625,320 720,330 740,315 795,295 820,338 885,310 918,340 920,385 940,400 952,490 930,560 890,590 885,670 850,675 820,655 780,665 775,730 720,700 660,680 560,615 530,590 515,520 492,455 510,415 545,385 590,380"), c: B, d: BLUE, n: 620, r: [1.3, 2.5], k: 3 },
  { p: stripA("960,565 1008,590 1010,660 985,700 945,695 938,640 942,590"), c: B, d: BLUE, n: 65, r: [1.4, 2.4] },
  { p: stripA("270,460 345,480 350,530 345,570 300,590 265,598 238,575 245,510"), c: G, d: TEAL, n: 100, r: [1.9, 3.6] },
  { p: stripA("270,635 345,610 400,600 445,565 465,575 495,600 498,650 520,680 550,650 575,685 605,680 615,715 645,720 650,770 685,765 685,830 720,815 738,895 680,910 665,960 650,995 575,1000 555,970 545,1055 520,1055 490,1010 460,1015 440,975 380,945 350,930 320,960 300,900 250,865 235,830 232,740 248,690"), c: G, d: TEAL, n: 620, r: [1.6, 3.5], k: 3 },
];
const compare2: Cl[] = [
  { p: stripA("1175,210 1185,165 1230,140 1270,158 1290,110 1330,100 1400,125 1415,160 1455,145 1475,180 1475,240 1450,280 1395,285 1380,240 1350,210 1290,240 1255,270 1250,310 1190,320 1180,270"), c: "url(#cool)", d: PINK, n: 45, r: [2.2, 3.4], k: 3, d2: BLUE },
  { p: stripA("1270,270 1370,262 1385,295 1430,290 1480,315 1475,390 1440,405 1410,375 1365,310 1310,322 1270,322"), c: O, d: ORANGE, n: 200, r: [0.9, 1.5] },
  { p: stripA("1258,345 1290,340 1350,325 1410,390 1412,430 1380,435 1378,500 1385,515 1330,530 1300,520 1240,490 1215,460 1210,420 1250,395"), c: B, d: BLUE, n: 210, r: [1.3, 2.4] },
  { p: stripA("1035,470 1050,410 1100,415 1140,395 1180,410 1182,460 1230,520 1225,570 1180,530 1140,535 1110,550 1080,530 1060,500"), c: G, d: TEAL, n: 80, r: [2.2, 4.2] },
  { p: stripA("1085,630 1160,625 1182,670 1180,730 1150,750 1090,740 1080,690"), c: B, d: BLUE, n: 120, r: [1.4, 2.5] },
  { p: [...stripA("1295,620 1310,600 1365,620 1385,575 1420,555 1440,540 1480,560 1520,520 1543,525 1547,570"), ...stripB("10,588 25,575 50,630 85,615 100,665 120,680 140,720 135,850 128,925 90,940 60,965 25,992 0,970"), ...stripA("1500,962 1480,990 1400,985 1335,945 1258,945 1250,880 1225,810 1235,780 1280,755 1290,680")], c: B, d: BLUE, n: 600, r: [1.3, 2.5], k: 3 },
  { p: [...stripB("12,250 40,190 95,165 140,155 180,185 225,165 240,195 275,160 285,210 320,235 340,275 380,295 400,360 415,430 400,520 355,570 340,630 240,635 170,630 100,600 80,545 45,510 0,500"), ...stripA("1535,485 1530,420 1540,370 1522,330 1530,290 1550,285 1555,240")], c: G, d: TEAL, n: 600, r: [1.7, 3.6], k: 3 },
  { p: stripB("420,490 470,478 490,490 530,480 545,540 530,590 470,605 430,575 412,540"), c: G, d: TEAL, n: 110, r: [1.9, 3.6] },
  { p: stripB("205,775 225,738 250,750 280,770 275,835 225,830 200,860 168,840 180,790"), c: B, d: BLUE, n: 65, r: [1.4, 2.4] },
];
const compare3: Cl[] = [
  { p: stripB("765,200 820,172 895,182 895,260 910,325 850,345 830,300 780,265 770,220"), c: G, d: TEAL, n: 75, r: [2, 4] },
  { p: stripB("600,290 655,275 680,300 708,325 700,370 665,380 650,410 610,395 605,350 588,325"), c: G, d: TEAL, n: 100, r: [1.5, 3] },
  { p: stripB("630,425 645,440 690,395 740,405 780,392 850,415 905,445 912,500 945,580 960,650 930,735 905,780 830,805 730,812 700,840 660,800 630,755 580,735 560,660 552,600 568,520 585,460 612,430"), c: G, d: TEAL, n: 720, r: [1.4, 2.9], k: 3 },
  { p: stripB("925,245 960,220 985,240 1010,225 1015,265 1070,245 1088,290 1110,330 1125,370 1060,395 1000,418 940,385 930,330 905,300 905,270"), c: B, d: BLUE, n: 220, r: [1.2, 2] },
  { p: stripB("950,185 955,120 985,85 1020,80 1045,105 1095,108 1130,98 1155,150 1200,210 1200,250 1140,285 1115,250 1140,190 1100,140 1060,160 1005,205"), c: "url(#cool)", d: PINK, n: 80, r: [1.4, 2.4], d2: BLUE },
  { p: stripB("1020,200 1075,170 1110,185 1110,225 1050,238 1018,225"), c: O, d: ORANGE, n: 60, r: [0.9, 1.6] },
  { p: stripB("1085,240 1135,290 1175,285 1215,300 1218,345 1185,390 1150,375 1100,315"), c: O, d: ORANGE, n: 110, r: [0.9, 1.6] },
  { p: stripB("982,470 985,500 1000,505 1005,480"), c: G, d: TEAL, n: 2, r: [2, 3] },
  { p: stripB("1065,455 1100,450 1180,440 1215,408 1270,440 1310,430 1320,510 1370,525 1385,590 1385,660 1350,745 1300,750 1265,830 1215,848 1140,845 1125,880 1100,820 1060,805 1010,720 995,660 1005,580 1040,520"), c: B, d: BLUE, n: 620, r: [1.1, 2.3], k: 3 },
  { p: stripB("1395,430 1455,410 1470,480 1410,530 1392,510"), c: B, d: BLUE, n: 60, r: [1.3, 2.2] },
  { p: stripB("930,910 965,890 1025,890 1035,970 950,1000 930,950"), c: B, d: BLUE, n: 115, r: [1.3, 2.2] },
];
const CompareMap = ({ x, w, h, items, seed, extra }: { x: number; w: number; h: number; items: Cl[]; seed: number; extra?: Pt[] }) => (
  <svg width={w} height={h} viewBox={`${x} 1190 ${w} ${h}`}>
    <defs>
      <linearGradient id="warm" gradientUnits="userSpaceOnUse" x1="0" x2="0" y1="1195" y2="1322">
        <stop offset="0" stopColor="#9069ae" /><stop offset=".22" stopColor="#b87a8c" /><stop offset=".48" stopColor="#d9946c" /><stop offset=".62" stopColor="#c79379" /><stop offset="1" stopColor="#6e7fa6" />
      </linearGradient>
      <linearGradient id="cool" gradientUnits="userSpaceOnUse" x1="0" x2="0" y1="1205" y2="1285">
        <stop offset="0" stopColor="#9069ae" /><stop offset="1" stopColor="#7484b0" />
      </linearGradient>
    </defs>
    {items.map((c, i) => (
      <g key={i}>
        <Dots seed={seed + i} poly={c.p} color={c.d} n={c.n} r={c.r} clump={c.k} core={0.4} pad={6} />
        {c.d2 && <Dots seed={seed + i + 50} poly={c.p} color={c.d2} n={c.n} r={c.r} clump={c.k} core={0.4} pad={6} />}
      </g>
    ))}
    {extra?.map(([cx, cy], i) => (
      <g key={i}>
        <Dots seed={seed + 70 + i} poly={items[1].p} color={PINK} n={45} r={[1.4, 2.5]} core={1} spot={[cx, cy, 26, 15]} pad={4} />
        <Dots seed={seed + 80 + i} poly={items[1].p} color={BLUE} n={45} r={[1.4, 2.5]} core={1} spot={[cx + 3, cy - 1, 24, 15]} pad={4} />
      </g>
    ))}
    {items.map((c, i) => <Outline key={i} poly={c.p} color={c.c} w={6} dash="17 9" />)}
    <path d={`M${x + 1} 1191H${x + w}M${x + 1} 1191V${1189 + h}M${x + 1} ${1189 + h}H${x + w}`} fill="none" stroke="#999" strokeWidth="2" strokeDasharray="9 6" />
    {x > 1400 && <path d={`M${x + w - 1} 1191V${1189 + h}`} stroke="#999" strokeWidth="2" strokeDasharray="9 6" />}
  </svg>
);

/* ---------- search panel charts ---------- */
const SPEED: [string, number][] = [["AUG A3", 880], ["AWM", 910], ["G36C", 880], ["Kar98", 760], ["M16A4", 900], ["M24", 790], ["M249", 915], ["M416", 890], ["MK14", 853], ["Mini14", 990], ["OBZ", 880], ["QBU", 800], ["SCAR-L", 880], ["SKS", 800], ["SLR", 835]];
const LEN = [52, 37, 37, 37, 46, 28, 37, 37, 38, 45, 29, 29, 47, 24, 24];
const SpeedChart = () => (
  <svg width="414" height="440" viewBox="2310 402 414 440">
    <path d="M2312 404h80" stroke="#bdbdbd" strokeWidth="2" />
    <g transform="translate(2571 381)"><Bulb /></g>
    <g transform="translate(2610 382) scale(1.350)"><Pencil /></g>
    <g transform="translate(2656 386) scale(1.400 1.250)"><Trash /></g>
    <rect x="2328.500" y="425" width="351" height="407" fill={BG} />
    <T x={2421} y={447} s={17.5} b w={226}>Bullet Speed = high level</T>
    {[0, 200, 400, 600, 800, 1000].map((v) => (
      <g key={v}><path d={`M2388 ${742 - v * 0.279}H2674`} stroke="#cfcfcf" strokeWidth="1.500" /><T x={2385.5} y={747 - v * 0.279} s={13.5} a="end" w={27} fill="#666">{(v / 1000).toFixed(1)}k</T></g>
    ))}
    <path d="M2674 463V742" stroke="#cfcfcf" strokeWidth="1.500" />
    {SPEED.map(([n, v], i) => (
      <g key={n}>
        <rect x={2395.5 + i * 18.6} y={742 - v * 0.279} width={17} height={v * 0.279} fill={BLUE} />
        <path d={`M${2403.5 + i * 18.6} 742v6`} stroke="#aaa" strokeWidth="1.500" />
        <T x={2408.5 + i * 18.6} y={753} s={14} a="end" rot={-90} w={LEN[i]}>{n}</T>
      </g>
    ))}
    <path d="M2395 463V742.500H2674" fill="none" stroke="#aaa" strokeWidth="1.800" />
    <T x={2477.5} y={822} s={14.5} b w={113}>Weapon Name</T>
    <T x={2348} y={602} s={15.5} b a="middle" rot={-90} w={165}>Mean of Bullet Speed</T>
    <VBar x={2698.5} w={25.5} y={402} h={442} top={447} bottom={815} up={415} down={828} />
  </svg>
);
const KillChart = () => (
  <svg width="414" height="240" viewBox="2310 889 414 240">
    <rect x="2311" y="890" width="81" height="27" fill="#c4c4c4" />
    <T x={2312} y={907} s={19} w={79} font={SANS} fill="#e14c4c">ID: #20-2</T>
    <g transform="translate(2571 892)"><Bulb /></g>
    <g transform="translate(2610 894) scale(1.350)"><Pencil /></g>
    <g transform="translate(2656 897) scale(1.400 1.300)"><Trash /></g>
    <rect x="2333" y="937.500" width="341" height="200" fill={BG} />
    <T x={2373} y={957.5} s={17.5} b w={292}>Shots to Kill (Chest) = high level</T>
    <path d="M2380 975H2659.500V1100M2380 1045H2659.500" fill="none" stroke="#cfcfcf" strokeWidth="1.500" />
    <path d="M2374 975h6V1100M2374 1045h6" stroke="#aaa" strokeWidth="1.800" fill="none" />
    <T x={2370} y={980} s={14} a="end" fill="#666">8</T><T x={2370} y={1050} s={14} a="end" fill="#666">6</T>
    <path d="M2438.500 975h21.500M2578 1010h21.500" stroke="#a3bace" strokeWidth="1.800" />
    <T x={2354} y={1040} s={15} b a="end" rot={-90}>(Chest)</T>
    <VBar x={2698.5} w={25.5} y={889} h={240} top={914} bottom={1130} up={902} />
  </svg>
);

const Field = ({ label, value, w, gap }: { label: string; value: string; w: number; gap: number }) => (
  <>
    <FieldLabel $w={w} $gap={gap}>{label}</FieldLabel>
    <FieldSelect><span>{value}</span><Chevron /></FieldSelect>
  </>
);

const zoomRings = zoomed("418,370 507,630 1427,467 1212,722 708,920 1080,908");

export default function App() {
  return (
    <>
      <Global />
      <Shell>
        <Toolbar>
          <DataSelect>Pubg<Chevron c="#777" /></DataSelect>
          <Field label="Attribute_1:" value="Weapon Type" w={140} gap={97} />
          <Field label="Attribute_2:" value="Range" w={141} gap={36} />
          <Field label="S_Attr:" value="Damage" w={82} gap={36} />
          <Field label="S_Value:" value="medium level" w={104} gap={36} />
          <Field label="Task:" value="distribution" w={62} gap={37} />
          <Field label="Score:" value="0.2-0.4" w={77} gap={37} />
          <FieldLabel $w={33} $gap={35}>ID:</FieldLabel><IdInput />
          <PlainButton $w={72} $gap={89}>Filter</PlainButton>
          <PlainButton $w={106} $gap={41}>Remove</PlainButton>
          <GreenButton $w={89} $gap={74}>Reset</GreenButton>
          <GreenButton $w={97} $gap={41}>Submit</GreenButton>
        </Toolbar>
        <Main>
          <Left>
            <TopRow>
              <NavPanel>
                <PanelHead>Navigation</PanelHead>
                <NavSection $h={211}>
                  <NavTitle>task distribution</NavTitle>
                  <MiniBars top={165} h={175} axis={277.5} bw={37.5} data={[[95.5, 192, "distr..", 2212, 42], [170.5, 269, "propo..", 210, 56], [245, 269.5, "aggre..", 187, 54], [319.5, 204, "corre..", 1924, 48]]} />
                </NavSection>
                <NavSection $h={211}>
                  <NavTitle>mark distribution</NavTitle>
                  <MiniBars top={376} h={176} axis={488} bw={30.5} data={[[85.5, 474.5, "bar", 307, 26], [146.5, 479, "arc", 210, 24], [207.5, 405, "tick", 1905, 28], [269, 480, "boxplot", 187, 60], [330, 404, "point", 1924, 41]]} />
                </NavSection>
                <NavSection $h={107}>
                  <WeightTitle>logical weight: <span>0.5</span></WeightTitle>
                  <Track $gap={29}><Fill /><Thumb /></Track>
                </NavSection>
                <NavSection $h={112}>
                  <WeightTitle $h={31}>encoding weight: <span>0.5</span></WeightTitle>
                  <Track $gap={33}><Fill /><Thumb /></Track>
                </NavSection>
                <NavSection $h={417}><MagazineChart /></NavSection>
              </NavPanel>
              <FactPanel>
                <PanelHead $h={60}>Fact overview</PanelHead>
                <FactCanvas />
                <CardStrip>
                  <FactCard><CardHead $inset={25}><span /><CardIcons /></CardHead><CardA /></FactCard>
                  <FactCard><CardHead><CardTag w={65}>ID: #489-0</CardTag><CardIcons /></CardHead><CardB /></FactCard>
                  <FactCard><CardHead><CardTag w={73}>ID: #1056-1</CardTag><CardIcons /></CardHead><CardC /></FactCard>
                  <FactCard><CardHead><CardTag w={65}>ID: #867-0</CardTag><CardIcons /></CardHead><CardD /></FactCard>
                </CardStrip>
                <LowerStrip><LowerCards /></LowerStrip>
              </FactPanel>
            </TopRow>
            <CompareRow>
              <Compare $w={722} $h={348}><CompareMap x={8} w={722} h={348} items={compare1} seed={100} extra={[[230, 1268], [332, 1216]]} /></Compare>
              <Compare $w={746} $h={349}><CompareMap x={730} w={746} h={349} items={compare2} seed={200} /></Compare>
              <Compare $w={743} $h={350}><CompareMap x={1476} w={743} h={350} items={compare3} seed={300} /></Compare>
            </CompareRow>
          </Left>
          <SearchPanel>
            <PanelHead $shift={20}>Transition Path Search</PanelHead>
            <SearchBody>
              <PathColumn>
                <SearchTitle>Input fact source and fact target:</SearchTitle>
                <Form>
                  <FormLabel $c="#9ac79c" $w={86}>Source:</FormLabel>
                  <TakeOff />
                  <FormInput $gap={16}>14-0</FormInput>
                  <FormLabel $c="#df4c99" $w={77}>Target:</FormLabel>
                  <Landing />
                  <FormInput $gap={28}>44-0</FormInput>
                  <GoButton type="button">Go</GoButton>
                </Form>
                <FromRow>
                  <svg width="46" height="54" viewBox="0 0 46 54"><path d="M23 54Q12 44 4 35C-4 22 2 0 23 0S50 22 42 35Q34 44 23 54Z" fill="#e5a273" /></svg>
                  <b>From #14-0 to #44-0</b>
                </FromRow>
                <Step $h={487}><StepMark>14-0</StepMark><PathCard $h={444}><SpeedChart /></PathCard></Step>
                <Step $h={260}><StepMark>20-2</StepMark><PathCard $h={244}><KillChart /></PathCard></Step>
              </PathColumn>
              <PathNote>
                <svg width="158" height="583" viewBox="2745 500 158 583">
                  <path d="M2747.500 1095V526Q2747.500 502.500 2771 502.500H2877Q2900 502.500 2900 526V1095" fill="none" stroke="#b1b1b1" strokeWidth="5" strokeDasharray="19 14" />
                  <T x={2801} y={605} s={66} rot={90} w={401} font={`"Liberation Serif", serif`} fill="#999">Transition path</T>
                </svg>
              </PathNote>
              <SideBar>
                <svg width="26" height="950" viewBox="2928 132 26 950"><VBar x={2928} w={25} y={132} h={950} top={158} bottom={1015} up={146} /></svg>
              </SideBar>
            </SearchBody>
            <ZoomCard>
              <svg width="706" height="451" viewBox="2238 1081 706 451">
                <rect x="2239" y="1082" width="704" height="449" fill="none" stroke="#979797" strokeWidth="2" strokeDasharray="9 6" />
                {nodesZoom.map((p, i) => <ClusterNode key={i} at={p} k={1.05} seed={i} />)}
                <Arcs f={zoomed} w={2} pts={[
                  ["510,628 610,480 830,330 1085,915", 0.95], ["507,620 485,250 450,150 418,375", 0.6],
                  ["507,620 550,450 640,360 702,885", 0.12], ["510,628 640,420 910,300 1195,695", 0.22], ["510,628 760,280 1080,190 1430,465", 0.16],
                ]} />
                {zoomRings.map(([x, y], i) => <circle key={i} cx={x} cy={y} r="5.500" fill="none" stroke={i === 1 ? "#d99a4c" : "#8a8088"} strokeWidth="1.800" />)}
                <g style={{ filter: "drop-shadow(4px 5px 3px rgba(0,0,0,.3))" }}><Outline poly={purpleZoom} color={PURPLE_LINE} w={6.5} dash="19 8" /></g>
              </svg>
            </ZoomCard>
          </SearchPanel>
        </Main>

        <Overlay width="2957" height="1545" viewBox="0 0 2957 1545">
          <g fill="none" stroke="#e5a273" strokeWidth="2.500">
            <path d="M2290.500 357V1081" strokeDasharray="5 3" strokeWidth="2" />
            <circle cx="2289.500" cy="430.500" r="7.500" fill={BG} /><circle cx="2289.500" cy="918" r="7.500" fill={BG} />
          </g>
          <path d="M506 129.500H2213M2212.500 129V1077H1670" fill="none" stroke="#6f958f" strokeWidth="2" />
          <g style={{ filter: "drop-shadow(4px 5px 3px rgba(0,0,0,.35))" }} fill="none" stroke={BADGE} strokeWidth="7.500">
            <path d="M716 878Q640 812 500 830" strokeDasharray="30 21" />
            <path d="M477 831 496 817 500 839Z" fill={BADGE} stroke="none" />
            <path d="M1785 1068Q1755 1000 1690 992" strokeDasharray="29 20" />
            <path d="M1666 985 1689 980 1685 1002Z" fill={BADGE} stroke="none" />
            <path d="M2136 796Q2235 935 2246 1090" strokeDasharray="31 22" />
            <path d="M2249 1114 2227 1076 2247 1092 2266 1074Z" fill={BADGE} stroke="none" />
          </g>
          <ellipse cx="722" cy="883" rx="32" ry="29" fill="none" stroke={BADGE} strokeWidth="4.500" strokeDasharray="18 14" />
          <g style={{ filter: "drop-shadow(3px -6px 17px rgba(0,0,0,.5))" }}>
            <path d="M1438 620 1474 660M1558 620 1521 660" stroke="#000" strokeWidth="19" strokeLinecap="round" />
            <rect x="1359.500" y="648" width="277.500" height="197" rx="44" />
            <circle cx="1429" cy="843" r="15" /><circle cx="1567.500" cy="843" r="15" />
          </g>
          <path d="M1457.500 675 1571 748.500 1457.500 813Z" fill="#fff" stroke="#2f5597" strokeWidth="2" style={{ filter: "drop-shadow(0 0 5px rgba(255,255,255,.6))" }} />
        </Overlay>
        <Badge $x={60} $y={123}><span>A</span></Badge>
        <Badge $x={563} $y={129.5}><span>B</span></Badge>
        <Badge $x={540} $y={910}><span>C</span></Badge>
        <Badge $x={2289} $y={122.5}><span>D</span></Badge>
        <Badge $x={2892} $y={67.5} $w={110} $h={113} $s={65}><span>F</span></Badge>
        <Badge $x={2298} $y={1468} $w={110} $h={113} $s={65}><span>E</span></Badge>
        <Badge $x={666} $y={1474} $s={59} $k={0.98}><span>B1</span></Badge>
        <Badge $x={1423.5} $y={1476} $s={59} $k={0.98}><span>B2</span></Badge>
        <Badge $x={2165} $y={1480} $s={59} $k={0.98}><span>B3</span></Badge>
      </Shell>
      <Bottom />
    </>
  );
}
